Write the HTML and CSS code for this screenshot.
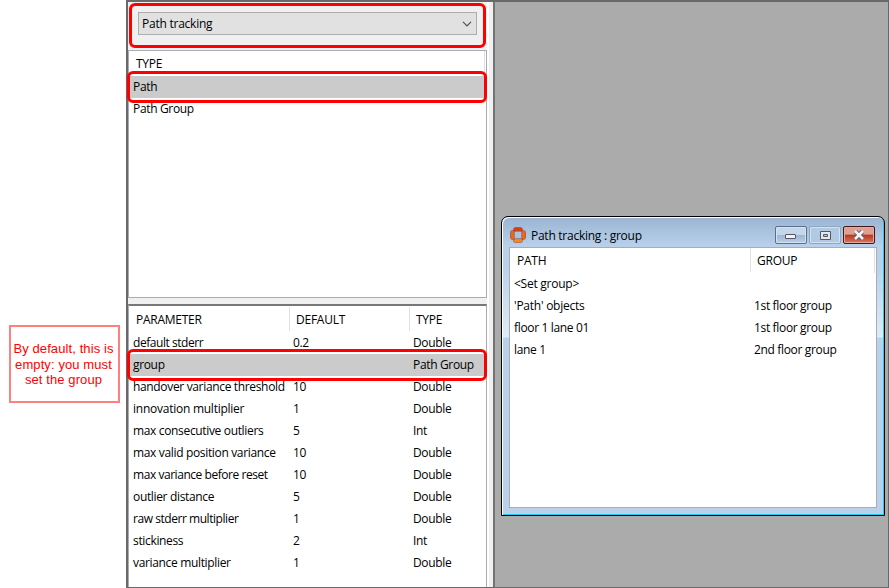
FILE: index.html
```html
<!DOCTYPE html>
<html lang="en">
<head>
<meta charset="utf-8">
<title>Path tracking</title>
<link rel="stylesheet" href="styles.css">
</head>
<body>
<div class="screen">
  <aside class="notes"><p class="callout">By default, this is<br>empty: you must<br>set the group</p></aside>
  <main class="app">
    <section class="sidebar">
      <div class="toolbar">
        <div class="combo"><span>Path tracking</span>
          <svg width="10" height="6" viewBox="0 0 10 6"><path d="M1 .8 5 4.800 9 .8" fill="none" stroke="#505050" stroke-width="1.200"/></svg>
        </div>
        <i class="mark mark-combo"></i>
      </div>
      <div class="list types">
        <div class="head"><span>TYPE</span></div>
        <div class="row selected"><span>Path</span><i class="mark mark-type"></i></div>
        <div class="row"><span>Path Group</span></div>
      </div>
      <div class="list params">
        <div class="head"><span>PARAMETER</span><span>DEFAULT</span><span>TYPE</span></div>
        <div class="row"><span class="tight">default stderr</span><span>0.2</span><span>Double</span></div>
        <div class="row selected"><span>group</span><span></span><span>Path Group</span><i class="mark mark-param"></i></div>
        <div class="row"><span>handover variance threshold</span><span>10</span><span>Double</span></div>
        <div class="row"><span class="loose">innovation multiplier</span><span>1</span><span>Double</span></div>
        <div class="row"><span>max consecutive outliers</span><span>5</span><span>Int</span></div>
        <div class="row"><span>max valid position variance</span><span>10</span><span>Double</span></div>
        <div class="row"><span class="tight">max variance before reset</span><span>10</span><span>Double</span></div>
        <div class="row"><span>outlier distance</span><span>5</span><span>Double</span></div>
        <div class="row"><span class="tight">raw stderr multiplier</span><span>1</span><span>Double</span></div>
        <div class="row"><span>stickiness</span><span>2</span><span>Int</span></div>
        <div class="row"><span>variance multiplier</span><span>1</span><span>Double</span></div>
      </div>
    </section>
    <section class="workspace">
      <div class="window">
        <header class="titlebar">
          <svg class="logo" width="16" height="16" viewBox="0 0 16 16">
            <path d="M5.500 2.500h5M13.500 5.500v5M10.500 13.500h-5M2.500 10.500v-5" fill="none" stroke="#a5482c" stroke-width="4.600" stroke-linecap="round"/>
            <path d="M2.500 10.500v-5M13.500 5.500v5" stroke="#ea661b" stroke-width="3.400" stroke-linecap="round"/>
            <path d="M5.500 2.500h5" stroke="#dc3d12" stroke-width="3.400" stroke-linecap="round"/>
            <path d="M10.500 13.500h-5" stroke="#f58a20" stroke-width="3.400" stroke-linecap="round"/>
            <path d="M5.500 4.300h5l1.200 1.200v5l-1.200 1.200h-5l-1.200-1.200v-5z" fill="#a9c2de" stroke="#8a5c55" stroke-width=".6"/>
          </svg>
          <h1>Path tracking : group</h1>
          <div class="buttons">
            <span class="btn"><svg width="12" height="5" viewBox="0 0 12 5"><rect x=".5" y=".5" width="10" height="4" rx=".5" fill="#f3f3f3" stroke="#535666"/></svg></span>
            <span class="btn dim"><svg width="11" height="9" viewBox="0 0 11 9"><path d="M.5.5h10v8H.5zM3.500 3.500h4v2h-4z" fill="#e4e8ec" fill-rule="evenodd" stroke="#535666"/></svg></span>
            <span class="btn close"><svg width="12" height="10" viewBox="0 0 12 10"><path d="M2.500 1.500 9.500 8.500M9.500 1.500 2.500 8.500" stroke="#535666" stroke-width="4.400"/><path d="M2 1 10 9M10 1 2 9" stroke="#f5f5f5" stroke-width="2.600"/></svg></span>
          </div>
        </header>
        <div class="list paths">
          <div class="head"><span>PATH</span><span>GROUP</span></div>
          <div class="row"><span class="loose">&lt;Set group&gt;</span><span></span></div>
          <div class="row"><span class="loose">'Path' objects</span><span>1st floor group</span></div>
          <div class="row"><span>floor 1 lane 01</span><span>1st floor group</span></div>
          <div class="row"><span>lane 1</span><span>2nd floor group</span></div>
        </div>
      </div>
    </section>
  </main>
</div>
</body>
</html>
```
FILE: styles.css
```css
* { box-sizing: border-box; }
body { margin: 0; background: #fff; color: #000; font: 12px/22px "Open Sans", "Noto Sans", sans-serif; letter-spacing: -.34px; overflow: hidden; }
.screen { display: flex; width: 889px; height: 588px; }
.notes { width: 126px; padding: 325px 0 0 9px; }
.callout { width: 111px; height: 78px; margin: 0; padding: 14px 2px 0 0; border: 2px solid #ff7f7f; color: #f00; text-align: center; white-space: nowrap; font: 13px/15.500px "Liberation Sans", sans-serif; letter-spacing: .1px; }
.app { display: flex; width: 763px; border: solid #696969; border-width: 2px 1px 1px 2px; }
.sidebar { display: flex; flex-direction: column; width: 365px; background: linear-gradient(90deg, #f0f0f0 359px, #fff 359px, #fff 361px, #f0f0f0 361px); }
.toolbar { position: relative; height: 48px; padding: 10px; }
.combo { display: flex; align-items: center; justify-content: space-between; width: 339px; height: 23px; padding: 0 4px 0 3px; border: 1px solid #adadad; background: #e1e1e1; letter-spacing: -.24px; }
.combo span { padding-top: 1px; }
.list { background: #fff; }
.types { width: 359px; height: 248px; border: 1px solid #a9acb2; }
.params { width: 359px; height: 283px; padding-top: 1px; margin-top: 6px; border: solid #a9acb2; border-width: 0 1px 0 1px; border-top: 2px solid #787878; }
.head, .row { display: grid; position: relative; white-space: nowrap; }
.head { height: 25px; line-height: 26px; letter-spacing: -.25px; }
.row { height: 22px; }
.row span { padding-left: 4px; }
.head span { padding-left: 7px; height: 24px; }
.head span:not(:last-child) { border-right: 1px solid #e0e0e0; }
.params .head, .params .row { grid-template-columns: 160px 120px 1fr; }
.paths .head, .paths .row { grid-template-columns: 240px 1fr; }
.params .head span:not(:last-child), .paths .head span:not(:last-child) { margin-right: -1px; }
.types .row, .params .row { margin-right: 2px; }
.types .head, .paths .head { margin-right: 1px; border-right: 1px solid #e0e0e0; }
.row .tight { letter-spacing: -.45px; }
.row .loose { letter-spacing: -.25px; }
.selected { background: #cbcbcb; box-shadow: 0 1px #fff; }
.mark { position: absolute; border: 3px solid #f00; border-radius: 6px; z-index: 1; }
.mark-combo { left: 1px; top: 1px; width: 357px; height: 45px; }
.mark-type { left: -2px; top: -5px; width: 360px; height: 32px; }
.mark-param { left: -2px; top: -5px; width: 360px; height: 32px; }
.workspace { flex: 1; border-left: 2px solid #737373; background: #ababab; padding: 214px 0 0 6px; }
.window { width: 384px; height: 300px; padding: 0 6px; border: 1px solid #000; border-radius: 7px 7px 0 0; background: linear-gradient(#9ab4d2 0, #b9d1ea 30px, #b9d1ea 50px, #dfebf7 120px, #b9d1ea 121px); box-shadow: inset 1px 1px #fff, inset -1px -1px #22cdee; }
.titlebar { display: flex; align-items: center; height: 30px; padding: 6px 3px 0 2px; }
.titlebar h1 { margin: 0 0 0 5px; padding-top: 2px; font-size: 12px; font-weight: 400; flex: 1; letter-spacing: -.26px; }
.buttons { display: flex; gap: 2px; }
.btn { display: flex; align-items: center; justify-content: center; width: 32px; height: 18px; border: 1px solid #5b6f8c; border-radius: 2px; background: linear-gradient(#c5d7ea 50%, #9cb5d1 50%, #b8d0e8); box-shadow: inset 0 0 0 1px #d5e3f1; }
.btn:first-child svg { margin-top: 3px; }
.dim { border-color: #8ea6c2; background: #b1c9e2; }
.close { border-color: #43151d; background: linear-gradient(#e0a091 45%, #b8361f 50%, #d47b62); box-shadow: inset 0 0 0 1px #e5a99c; }
.paths { height: 261px; width: 368px; border: 1px solid #a9acb2; margin-left: 1px; }
```
